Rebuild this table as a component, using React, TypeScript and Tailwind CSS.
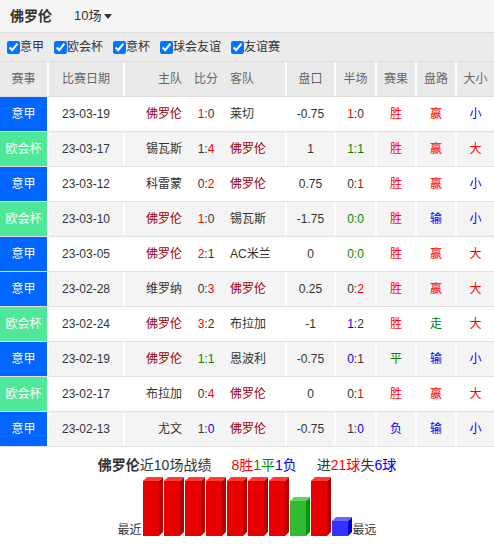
import React from "react"

interface Match {
  league: "意甲" | "欧会杯"
  date: string
  home: string
  hg: number
  ag: number
  away: string
  line: string
  hth: number
  hta: number
  result: "胜" | "平" | "负"
  pan: "赢" | "走" | "输"
  size: "大" | "小"
}

const TEAM = "佛罗伦"

const MATCHES: Match[] = [
  { league: "意甲", date: "23-03-19", home: TEAM, hg: 1, ag: 0, away: "莱切", line: "-0.75", hth: 1, hta: 0, result: "胜", pan: "赢", size: "小" },
  { league: "欧会杯", date: "23-03-17", home: "锡瓦斯", hg: 1, ag: 4, away: TEAM, line: "1", hth: 1, hta: 1, result: "胜", pan: "赢", size: "大" },
  { league: "意甲", date: "23-03-12", home: "科雷蒙", hg: 0, ag: 2, away: TEAM, line: "0.75", hth: 0, hta: 1, result: "胜", pan: "赢", size: "小" },
  { league: "欧会杯", date: "23-03-10", home: TEAM, hg: 1, ag: 0, away: "锡瓦斯", line: "-1.75", hth: 0, hta: 0, result: "胜", pan: "输", size: "小" },
  { league: "意甲", date: "23-03-05", home: TEAM, hg: 2, ag: 1, away: "AC米兰", line: "0", hth: 0, hta: 0, result: "胜", pan: "赢", size: "大" },
  { league: "意甲", date: "23-02-28", home: "维罗纳", hg: 0, ag: 3, away: TEAM, line: "0.25", hth: 0, hta: 2, result: "胜", pan: "赢", size: "大" },
  { league: "欧会杯", date: "23-02-24", home: TEAM, hg: 3, ag: 2, away: "布拉加", line: "-1", hth: 1, hta: 2, result: "胜", pan: "走", size: "大" },
  { league: "意甲", date: "23-02-19", home: TEAM, hg: 1, ag: 1, away: "恩波利", line: "-0.75", hth: 0, hta: 1, result: "平", pan: "输", size: "小" },
  { league: "欧会杯", date: "23-02-17", home: "布拉加", hg: 0, ag: 4, away: TEAM, line: "0", hth: 0, hta: 1, result: "胜", pan: "赢", size: "大" },
  { league: "意甲", date: "23-02-13", home: "尤文", hg: 1, ag: 0, away: TEAM, line: "-0.75", hth: 1, hta: 0, result: "负", pan: "输", size: "小" },
]

const FILTERS = ["意甲", "欧会杯", "意杯", "球会友谊", "友谊赛"]

const WIN = "text-[#ff0000]"
const DRAW = "text-[#008800]"
const LOSS = "text-[#0000ff]"

const markColor: Record<string, string> = {
  胜: WIN, 赢: WIN, 大: WIN,
  平: DRAW, 走: DRAW,
  负: LOSS, 输: LOSS, 小: LOSS,
}

// score with the team's own goals coloured by how it stood
function Score({ h, a, teamHome }: { h: number; a: number; teamHome: boolean }) {
  if (h === a) {
    return <span className={DRAW}>{h}:{a}</span>
  }
  const mine = teamHome ? h : a
  const theirs = teamHome ? a : h
  const cls = mine > theirs ? WIN : LOSS
  return teamHome ? (
    <span><span className={cls}>{h}</span>:{a}</span>
  ) : (
    <span>{h}:<span className={cls}>{a}</span></span>
  )
}

const GRID = "grid grid-cols-[49px_76px_61px_40px_61px_49px_41px_40px_40px_37px]"
const DIV = "border-r-2 border-white"

function TeamName({ name }: { name: string }) {
  return <span className={name === TEAM ? "text-[#990000]" : ""}>{name}</span>
}

const BARS: ("w" | "d" | "l")[] = ["w", "w", "w", "w", "w", "w", "w", "d", "w", "l"]
const BAR_STYLE = {
  w: { top: 4, front: "#e60000", side: "#b80000", cap: "#ff3a3a" },
  d: { top: 24, front: "#33bb33", side: "#009900", cap: "#5fd85f" },
  l: { top: 44, front: "#3333ff", side: "#0000cc", cap: "#6a6aff" },
}

function FormChart() {
  const bottom = 59
  return (
    <svg width="210" height="60" viewBox="0 0 210 60">
      {BARS.map((b, i) => {
        const s = BAR_STYLE[b]
        const x = i * 21
        const t = s.top
        return (
          <g key={i}>
            <rect x={x} y={t} width={16} height={bottom - t} fill={s.front} />
            <polygon points={`${x + 16},${t} ${x + 20},${t - 4} ${x + 20},${bottom - 4} ${x + 16},${bottom}`} fill={s.side} />
            <polygon points={`${x},${t} ${x + 4},${t - 4} ${x + 20},${t - 4} ${x + 16},${t}`} fill={s.cap} />
          </g>
        )
      })}
    </svg>
  )
}

export default function App() {
  return (
    <div
      className="w-[494px] h-[544px] bg-white text-[#333] overflow-hidden"
      style={{ fontFamily: '"Liberation Sans", "Noto Sans CJK SC", sans-serif' }}
    >
      {/* top bar */}
      <div className="h-[33px] bg-[#f5f5f5] border-b border-[#dddddd] flex items-center">
        <span className="ml-[10px] text-[14px] font-bold">{TEAM}</span>
        <span className="ml-[22px] text-[13px] flex items-center">
          10场
          <svg width="8" height="5" viewBox="0 0 8 5" className="ml-[3px]">
            <polygon points="0,0 8,0 4,5" fill="#333" />
          </svg>
        </span>
      </div>

      {/* league filters */}
      <div className="h-[29px] bg-[#ececec] border-b border-[#dddddd] flex items-center pl-[7px] gap-[10px] text-[12px]">
        {FILTERS.map((f) => (
          <label key={f} className="flex items-center">
            <input type="checkbox" checked readOnly className="m-0 w-[13px] h-[13px] accent-[#0075ff]" />
            <span>{f}</span>
          </label>
        ))}
      </div>

      {/* table header */}
      <div className={`${GRID} h-[35px] bg-[#eaeaea] text-[12px] text-[#666] border-b border-[#dddddd]`}>
        <div className={`${DIV} flex items-center justify-center`}>赛事</div>
        <div className={`${DIV} flex items-center justify-center`}>比赛日期</div>
        <div className="flex items-center justify-end pr-[4px]">主队</div>
        <div className="flex items-center justify-center">比分</div>
        <div className={`${DIV} flex items-center pl-[4px]`}>客队</div>
        <div className={`${DIV} flex items-center justify-center`}>盘口</div>
        <div className={`${DIV} flex items-center justify-center`}>半场</div>
        <div className={`${DIV} flex items-center justify-center`}>赛果</div>
        <div className={`${DIV} flex items-center justify-center`}>盘路</div>
        <div className="flex items-center justify-center">大小</div>
      </div>

      {/* rows */}
      {MATCHES.map((m, idx) => {
        const teamHome = m.home === TEAM
        return (
          <div
            key={m.date}
            className={`${GRID} h-[35px] text-[12px] border-b border-[#e2e2e2] ${idx % 2 === 1 ? "bg-[#f4f4f4]" : "bg-white"}`}
          >
            <div
              className={`${DIV} flex items-center justify-center text-white ${m.league === "意甲" ? "bg-[#0066ff]" : "bg-[#4ee898]"}`}
            >
              {m.league}
            </div>
            <div className={`${DIV} flex items-center justify-center`}>{m.date}</div>
            <div className="flex items-center justify-end pr-[4px]">
              <TeamName name={m.home} />
            </div>
            <div className="flex items-center justify-center">
              <Score h={m.hg} a={m.ag} teamHome={teamHome} />
            </div>
            <div className={`${DIV} flex items-center pl-[4px]`}>
              <TeamName name={m.away} />
            </div>
            <div className={`${DIV} flex items-center justify-center`}>{m.line}</div>
            <div className={`${DIV} flex items-center justify-center`}>
              <Score h={m.hth} a={m.hta} teamHome={teamHome} />
            </div>
            <div className={`${DIV} flex items-center justify-center ${markColor[m.result]}`}>{m.result}</div>
            <div className={`${DIV} flex items-center justify-center ${markColor[m.pan]}`}>{m.pan}</div>
            <div className={`flex items-center justify-center ${markColor[m.size]}`}>{m.size}</div>
          </div>
        )
      })}

      {/* recent form summary */}
      <div className="mt-[8px] flex justify-center items-center gap-[20px] text-[14px] leading-[20px]">
        <span>
          <b>{TEAM}</b>近10场战绩
        </span>
        <span>
          <span className={WIN}>8胜</span>
          <span className={DRAW}>1平</span>
          <span className={LOSS}>1负</span>
        </span>
        <span>
          进<span className={WIN}>21球</span>失<span className={LOSS}>6球</span>
        </span>
      </div>
      <div className="mt-[2px] flex justify-center items-end text-[12px] leading-[14px]">
        <span className="mr-[1px]">最近</span>
        <FormChart />
        <span>最远</span>
      </div>
    </div>
  )
}
